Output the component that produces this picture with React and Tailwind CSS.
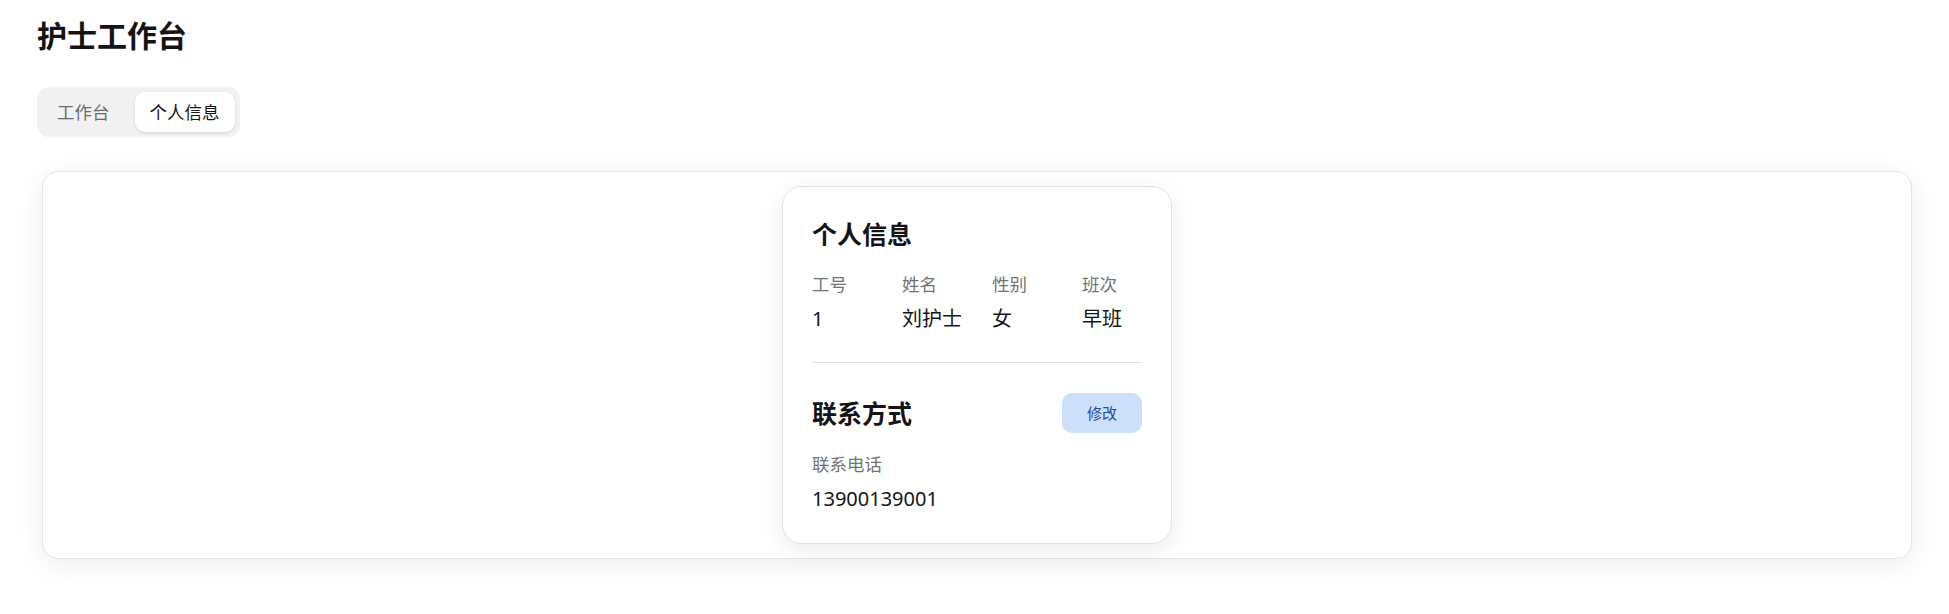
export default function App() {
  const info = [
    { label: "工号", value: "1" },
    { label: "姓名", value: "刘护士" },
    { label: "性别", value: "女" },
    { label: "班次", value: "早班" },
  ];
  return (
    <div
      className="min-h-screen bg-white px-[37px] pt-[18px] text-[#141414]"
      style={{ fontFamily: '"Noto Sans", "Noto Sans CJK SC", sans-serif' }}
    >
      <h1 className="text-[30px] font-bold leading-[36px]">护士工作台</h1>

      <div className="mt-[33px] inline-flex items-center gap-[10px] rounded-[12px] bg-[#f1f1f1] p-[5px]">
        <button className="h-[40px] rounded-[10px] px-[15px] text-[17.5px] leading-[25px] text-[#6b6b6b]">
          工作台
        </button>
        <button className="h-[40px] rounded-[10px] bg-white px-[15px] text-[17.5px] leading-[25px] text-[#141414] shadow-[0_1px_3px_rgba(0,0,0,0.12)]">
          个人信息
        </button>
      </div>

      <div className="ml-[5px] mt-[34px] rounded-[16px] border border-[#e5e5e5] bg-white p-[14px] shadow-[0_6px_28px_rgba(0,0,0,0.07)]">
        <div className="mx-auto w-[390px] rounded-[20px] border border-[#e3e3e3] bg-white px-[29px] pb-[29px] pt-[30px] shadow-[0_6px_24px_rgba(0,0,0,0.08)]">
          <h2 className="text-[25px] font-bold leading-[35px]">个人信息</h2>
          <div className="mt-[20px] grid grid-cols-4 gap-x-[30px]">
            {info.map((it) => (
              <div key={it.label}>
                <div className="text-[17.5px] leading-[25px] text-[#737373]">{it.label}</div>
                <div className="mt-[7px] text-[20px] leading-[30px] text-[#141414]">{it.value}</div>
              </div>
            ))}
          </div>
          <div className="mt-[28px] h-px bg-[#e0e0e0]" />
          <div className="mt-[30px] flex items-center justify-between">
            <h2 className="text-[25px] font-bold leading-[35px]">联系方式</h2>
            <button className="h-[40px] w-[80px] rounded-[10px] bg-[#cce0fa] text-[15px] text-[#1f4d99]">
              修改
            </button>
          </div>
          <div className="mt-[19px] text-[17.5px] leading-[25px] text-[#737373]">联系电话</div>
          <div className="mt-[7px] text-[20px] leading-[30px] text-[#141414]">13900139001</div>
        </div>
      </div>
    </div>
  );
}
